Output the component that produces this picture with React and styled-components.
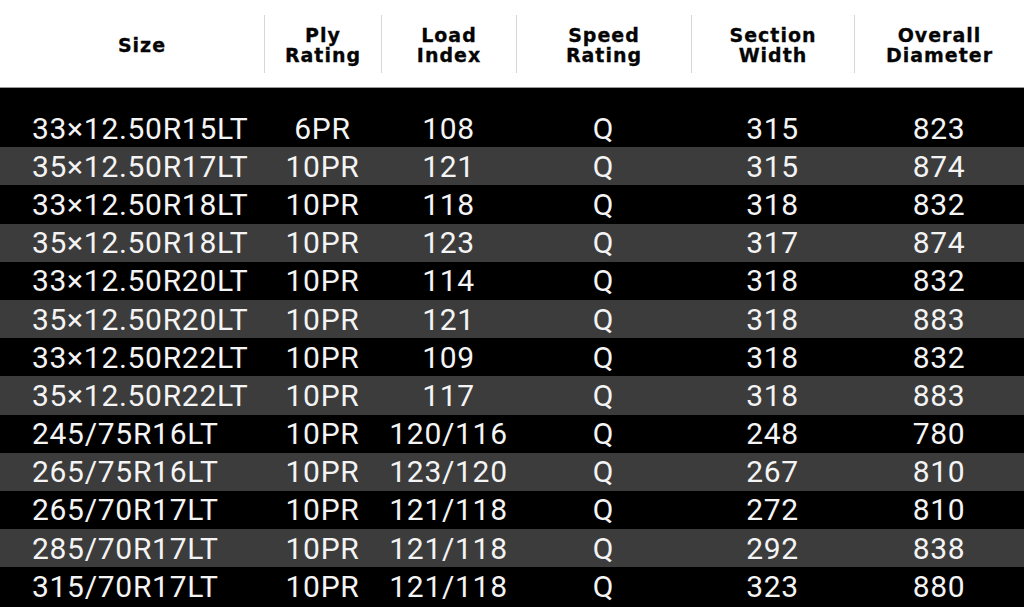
import React from "react";
import styled, {createGlobalStyle} from "styled-components";

const GlobalStyle=createGlobalStyle`
html,body{
margin:0;
padding:0;
background:#000;
}
`

const COLS="264px 117px 135px 175px 163px 170px"

const Table=styled.div`
width:1024px;
height:607px;
display:flex;
flex-direction:column;
background:#000;
overflow:hidden;
`

const HeaderRow=styled.div`
display:grid;
grid-template-columns:${COLS};
height:87px;
background:#fff;
border-bottom:1px solid #9a9a9a;
align-items:center;
`

const HeadCell=styled.div`
height:58px;
display:flex;
align-items:center;
justify-content:center;
text-align:center;
padding-top:3px;
box-sizing:border-box;
padding-left:${p=>p.$pad || 0}px;
border-left:${p=>p.$first ? "none" : "1px solid #d6d6d6"};
font-family:"DejaVu Sans", sans-serif;
font-weight:700;
font-size:19px;
line-height:20px;
letter-spacing:1px;
color:#050505;
-webkit-text-stroke:0.3px #050505;
`

const Body=styled.div`
flex:1;
padding-top:21px;
`

const Row=styled.div`
display:grid;
grid-template-columns:${COLS};
height:38.2px;
align-items:center;
background:${p=>p.$alt ? "#3c3c3c" : "#000"};
`

const Cell=styled.div`
font-family:Roboto, "Liberation Sans", sans-serif;
font-size:30px;
letter-spacing:0.7px;
color:#f4f4f4;
text-align:${p=>p.$left ? "left" : "center"};
padding-left:${p=>p.$left ? "32px" : "0"};
white-space:nowrap;
`

const headers=[
    ["Size"],
    ["Ply","Rating"],
    ["Load","Index"],
    ["Speed","Rating"],
    ["Section","Width"],
    ["Overall","Diameter"],
]

const rows=[
    ["33×12.50R15LT","6PR","108","Q","315","823"],
    ["35×12.50R17LT","10PR","121","Q","315","874"],
    ["33×12.50R18LT","10PR","118","Q","318","832"],
    ["35×12.50R18LT","10PR","123","Q","317","874"],
    ["33×12.50R20LT","10PR","114","Q","318","832"],
    ["35×12.50R20LT","10PR","121","Q","318","883"],
    ["33×12.50R22LT","10PR","109","Q","318","832"],
    ["35×12.50R22LT","10PR","117","Q","318","883"],
    ["245/75R16LT","10PR","120/116","Q","248","780"],
    ["265/75R16LT","10PR","123/120","Q","267","810"],
    ["265/70R17LT","10PR","121/118","Q","272","810"],
    ["285/70R17LT","10PR","121/118","Q","292","838"],
    ["315/70R17LT","10PR","121/118","Q","323","880"],
]

const App=()=>{
    return(
        <>
        <GlobalStyle/>
        <Table>
            <HeaderRow>
                {headers.map((h,i)=>(
                    <HeadCell key={i} $first={i===0} $pad={i===0 ? 20 : 0}>
                        <div>{h.map((line,j)=><div key={j}>{line}</div>)}</div>
                    </HeadCell>
                ))}
            </HeaderRow>
            <Body>
                {rows.map((r,i)=>(
                    <Row key={i} $alt={i%2===1}>
                        {r.map((v,j)=><Cell key={j} $left={j===0}>{v}</Cell>)}
                    </Row>
                ))}
            </Body>
        </Table>
        </>
    )
}

export default App
